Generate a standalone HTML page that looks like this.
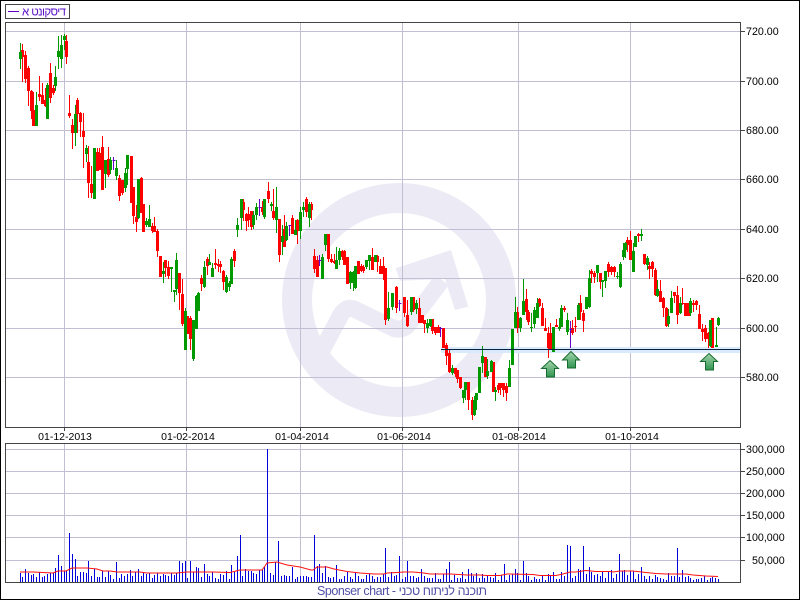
<!DOCTYPE html>
<html lang="he">
<head>
<meta charset="utf-8">
<title>Chart</title>
<style>
html,body{margin:0;padding:0;background:#fff;width:800px;height:600px;overflow:hidden}
svg{display:block;position:absolute;left:0;top:0}
text{font-family:"Liberation Sans","Noto Sans CJK JP",sans-serif}
</style>
</head>
<body>
<svg width="800" height="600" viewBox="0 0 800 600" xmlns="http://www.w3.org/2000/svg">
<defs>
<linearGradient id="ag" x1="0" y1="0" x2="0" y2="1"><stop offset="0" stop-color="#a6d6ae"/><stop offset="1" stop-color="#2f9450"/></linearGradient>
</defs>
<rect width="800" height="600" fill="#fff"/>
<!-- watermark -->
<g fill="none" stroke="#ecebf5">
<circle cx="399" cy="300" r="102" stroke-width="30"/>
<path d="M320 354L340.7 315Q346 306 354 309L393 328Q400 331 407 326L442 280" stroke-width="17" stroke-linejoin="round"/>
</g>
<polygon points="395.7,268.3 451,250 468.3,306.7 455,310 445,279 400,280.7" fill="#ecebf5"/>
<!-- grid -->
<g stroke="#c2bfd4" stroke-width="1" shape-rendering="crispEdges" fill="none">
<path d="M6 31.5H740M6 81.5H740M6 130.5H740M6 179.5H740M6 229.5H740M6 278.5H740M6 328.5H740M6 377.5H740"/>
<path d="M64.5 23V427M186.5 23V427M300.5 23V427M402.5 23V427M518.5 23V427M630.5 23V427"/>
<path d="M6 449.5H740M6 471.5H740M6 493.5H740M6 515.5H740M6 537.5H740M6 560.5H740"/>
<path d="M64.5 444V582M186.5 444V582M300.5 444V582M402.5 444V582M518.5 444V582M630.5 444V582"/>
</g>
<!-- support line -->
<rect x="441" y="347" width="299" height="6" fill="#d8eafb"/>
<!-- candles -->
<g transform="translate(.5,0)" fill="none" shape-rendering="crispEdges">
<path stroke="#ff0000" stroke-width="1" d="M22 44V82M25 51V83M28 66V106M31 90V119M33 92V126M39 76V101M42 83V104M45 88V107M50 63V103M53 85V95M66 35V64M69 95V118M72 119V149M77 98V133M80 112V137M83 113V168M88 146V198M91 166V198M97 148V171M99 148V170M102 136V190M108 147V177M119 175V201M122 180V195M131 156V203M133 187V224M136 205V232M141 177V213M143 204V232M152 223V233M154 217V232M157 229V257M160 256V277M165 260V277M168 261V279M179 273V310M182 279V326M187 316V334M190 316V350M201 275V291M207 257V275M215 249V269M218 259V272M220 261V273M223 270V290M234 249V267M243 199V221M246 213V231M248 207V227M251 211V230M262 201V215M268 182V203M273 189V220M279 219V262M284 215V247M292 215V234M297 219V244M306 197V217M311 202V220M314 249V273M317 256V277M328 234V262M331 254V263M334 254V264M342 250V260M344 250V265M347 257V284M358 261V274M361 264V272M363 265V273M372 248V270M377 255V272M380 259V274M383 257V280M385 268V325M396 286V313M404 297V317M407 300V327M413 297V312M419 298V323M422 315V323M424 320V333M432 319V334M435 327V335M438 325V333M443 328V348M446 343V365M449 349V373M455 368V377M457 370V383M460 377V389M468 382V410M472 397V420M485 357V377M493 362V392M498 383V393M500 383V395M503 383V397M506 383V401M517 307V333M526 289V320M528 310V325M539 298V307M542 303V326M545 318V331M548 327V358M550 323V350M556 319V327M564 306V312M572 320V335M575 317V332M580 295V320M583 310V332M591 269V283M594 271V283M600 273V289M608 262V277M611 266V275M614 266V277M627 237V252M630 231V260M638 233V242M644 254V265M649 262V279M652 261V277M655 268V296M660 280V302M663 297V317M666 307V327M674 292V303M677 286V324M682 288V305M685 303V316M688 303V316M693 300V312M696 300V310M699 305V329M702 324V341M705 325V342M708 332V348M712 318V348"/>
<path stroke="#ff0000" stroke-width="3" d="M22 50V57M25 55V79M28 68V91M31 91V111M33 110V126M39 94V97M42 95V104M45 100V106M50 73V98M53 88V93M66 41V57M69 113V116M72 125V133M77 100V114M80 113V122M83 131V137M88 162V183M91 184V193M97 152V171M99 153V170M102 147V190M108 159V175M119 178V196M122 180V193M131 156V203M133 187V216M136 217V222M141 178V213M143 204V232M152 226V231M154 226V232M157 231V251M160 256V277M165 260V268M168 267V276M179 273V293M182 294V324M187 316V334M190 318V339M201 278V284M207 259V266M215 263V265M218 264V266M220 264V267M223 271V282M234 251V261M243 202V210M246 214V221M248 214V220M251 211V227M262 207V212M268 191V199M273 211V218M279 219V255M284 229V247M292 218V234M297 220V231M306 199V212M311 204V210M314 256V269M317 260V277M328 234V259M331 259V262M334 261V263M342 251V257M344 251V265M347 257V284M358 261V274M361 266V271M363 267V271M372 257V270M377 256V262M380 266V274M383 266V274M385 268V320M396 287V308M404 297V313M407 315V326M413 297V310M419 308V323M422 315V323M424 320V324M432 319V331M435 327V333M438 327V333M443 328V348M446 345V356M449 353V372M455 368V374M457 370V379M460 377V388M468 382V400M472 400V415M485 357V377M493 362V392M498 385V390M500 383V388M503 383V390M506 386V393M517 312V328M526 299V312M528 312V322M539 299V306M542 308V326M545 328V331M548 333V348M550 333V350M556 325V327M564 308V310M572 328V333M575 326V327M580 303V312M583 313V321M591 271V274M594 273V277M600 273V282M608 264V272M611 267V272M614 267V272M627 240V245M630 240V260M638 234V236M644 254V264M649 266V269M652 262V269M655 270V295M660 291V302M663 298V308M666 308V326M674 292V296M677 295V315M682 303V304M685 303V316M688 303V316M693 303V305M696 301V305M699 314V329M702 329V332M705 328V339M708 333V339M712 318V348"/>
<path stroke="#009900" stroke-width="1" d="M20 43V69M36 92V126M47 83V119M55 66V91M58 36V69M61 35V68M64 34V50M75 105V146M86 145V162M94 148V199M105 160V188M110 157V174M116 160V180M125 168V192M127 155V185M138 179V219M146 218V227M149 205V227M163 262V283M171 267V292M174 290V302M176 253V295M185 308V350M193 320V361M196 295V329M198 292V311M204 261V288M209 254V265M212 263V277M226 275V293M229 281V291M231 257V284M237 218V237M241 199V230M253 211V229M256 203V220M264 199V219M271 202V211M276 187V233M282 225V255M286 222V241M295 220V235M300 207V239M303 202V217M309 202V227M322 254V279M325 234V251M336 247V269M339 248V265M350 271V289M353 271V291M355 266V289M366 260V269M369 255V270M375 255V262M388 292V321M392 293V310M411 297V315M416 300V314M427 319V333M430 319V327M452 365V375M463 390V403M465 382V400M474 396V416M476 393V410M479 367V393M482 346V373M487 359V379M491 360V372M495 387V401M509 360V387M512 329V365M515 297V328M520 317V332M523 279V315M531 313V332M534 307V328M537 298V318M553 327V352M559 318V331M561 305V327M567 313V335M578 303V320M586 297V309M589 270V308M597 265V282M602 280V297M605 271V288M617 272V279M620 262V288M623 243V260M625 242V258M633 243V272M635 236V247M641 229V241M647 256V270M657 280V297M668 309V327M671 291V313M680 297V314M690 298V316M710 320V347M716 327V347M718 317V326"/>
<path stroke="#009900" stroke-width="3" d="M20 52V59M36 105V126M47 85V119M55 77V86M58 51V57M61 45V59M64 36V40M75 114V133M86 148V154M94 148V199M105 160V174M110 160V170M116 168V176M125 173V188M127 155V169M138 179V218M146 221V225M149 219V227M163 271V274M171 267V269M174 290V292M176 260V289M185 311V350M193 320V359M196 296V329M198 293V311M204 267V287M209 262V265M212 268V277M226 277V292M229 283V287M231 259V284M237 225V230M241 199V218M253 215V225M256 207V215M264 199V217M271 204V206M276 207V220M282 236V242M286 226V240M295 230V235M300 212V231M303 207V210M309 204V218M322 257V279M325 234V245M336 260V269M339 251V260M350 272V283M353 272V283M355 266V288M366 260V267M369 255V261M375 255V262M388 308V319M392 293V307M411 297V312M416 303V309M427 323V328M430 319V326M452 368V373M463 390V398M465 382V390M474 400V415M476 393V400M479 367V393M482 356V363M487 371V376M491 361V372M495 390V392M509 368V387M512 329V365M515 312V328M520 318V328M523 301V315M531 327V328M534 310V324M537 303V318M553 327V352M559 327V329M561 308V327M567 320V332M578 305V320M586 297V309M589 278V307M597 265V273M602 280V282M605 271V281M617 276V277M620 264V287M623 250V257M625 243V250M633 251V272M635 236V247M641 234V236M647 258V265M657 289V296M668 316V324M671 298V313M680 303V313M690 301V313M710 320V346M716 345V347M718 318V325"/>
<path stroke="#6600cc" stroke-width="1" d="M113 157V170M259 199V216M289 225V236M319 255V266M399 300V311M440 327V337M570 321V348"/>
<path stroke="#6600cc" stroke-width="1" d="M112 160.5h3M258 207.5h3M288 225.5h3M318 260.5h3M398 303.5h3M439 328.5h3M569 329.5h3"/>
</g>
<rect x="441" y="349" width="299" height="1" fill="#08223f"/>
<!-- arrows -->
<g fill="url(#ag)" stroke="#176b2e" stroke-width="1">
<polygon points="550,360.5 558.5,368.5 554.5,368.5 554.5,377 546.5,377 546.5,368.5 541.5,368.5"/>
<polygon points="571,351.5 579.5,360 575.5,360 575.5,368 567.5,368 567.5,360 562.5,360"/>
<polygon points="709,353.5 717.5,361.5 713.5,361.5 713.5,370 705.5,370 705.5,361.5 700.5,361.5"/>
</g>
<!-- volume bars -->
<path fill="none" stroke="#0000dd" stroke-width="1" shape-rendering="crispEdges" transform="translate(.5,0)" d="M20 573V582M22 577V582M25 569V582M28 573V582M31 575V582M33 574V582M36 577V582M39 572V582M42 577V582M44 576V582M47 574V582M50 573V582M53 573V582M55 568V582M58 555V582M61 566V582M64 571V582M66 571V582M69 533V582M72 554V582M75 559V582M77 576V582M80 572V582M83 572V582M86 573V582M88 561V582M91 576V582M94 569V582M97 577V582M99 577V582M102 571V582M105 577V582M108 571V582M110 575V582M113 579V582M116 562V582M119 578V582M121 574V582M124 576V582M127 574V582M130 570V582M132 576V582M135 572V582M138 569V582M141 576V582M143 573V582M146 574V582M149 573V582M152 578V582M154 575V582M157 573V582M160 576V582M163 574V582M165 575V582M168 576V582M171 573V582M174 575V582M176 573V582M179 561V582M182 563V582M185 561V582M187 578V582M190 561V582M193 572V582M196 567V582M198 568V582M201 577V582M204 564V582M207 574V582M209 576V582M212 572V582M215 578V582M218 579V582M220 574V582M223 575V582M226 571V582M229 579V582M231 565V582M234 572V582M237 556V582M240 535V582M242 576V582M245 569V582M248 571V582M251 571V582M253 573V582M256 574V582M259 570V582M262 570V582M264 567V582M267 449V582M270 573V582M273 575V582M275 562V582M278 541V582M281 576V582M284 575V582M286 576V582M289 576V582M292 567V582M295 579V582M297 577V582M300 576V582M303 576V582M306 576V582M308 577V582M311 577V582M314 535V582M317 566V582M319 564V582M322 573V582M325 566V582M328 577V582M330 578V582M333 577V582M336 565V582M339 579V582M341 579V582M344 576V582M347 572V582M350 577V582M352 579V582M355 573V582M358 576V582M361 579V582M363 579V582M366 575V582M369 574V582M372 576V582M374 579V582M377 577V582M380 577V582M383 574V582M385 548V582M388 577V582M391 572V582M394 576V582M396 575V582M399 556V582M402 579V582M405 577V582M407 561V582M410 576V582M413 576V582M416 578V582M418 577V582M421 569V582M424 576V582M427 578V582M429 578V582M432 578V582M435 573V582M438 579V582M440 579V582M443 574V582M446 569V582M449 562V582M451 580V582M454 575V582M457 578V582M460 578V582M462 572V582M465 579V582M468 569V582M471 573V582M473 576V582M476 573V582M479 578V582M482 574V582M484 578V582M487 575V582M490 577V582M493 578V582M495 573V582M498 580V582M501 575V582M504 564V582M506 580V582M509 575V582M512 574V582M515 569V582M517 573V582M520 580V582M523 561V582M526 573V582M528 576V582M531 580V582M534 577V582M536 579V582M539 579V582M542 575V582M545 580V582M548 574V582M550 575V582M553 572V582M556 579V582M559 579V582M561 572V582M564 576V582M567 545V582M570 546V582M572 578V582M575 576V582M578 569V582M580 570V582M583 546V582M586 574V582M589 567V582M591 572V582M594 575V582M597 574V582M600 576V582M602 572V582M605 578V582M608 572V582M611 570V582M613 578V582M616 574V582M619 554V582M622 571V582M624 570V582M627 575V582M630 571V582M633 571V582M635 579V582M638 574V582M641 567V582M644 576V582M646 579V582M649 576V582M652 579V582M655 575V582M657 577V582M660 578V582M663 579V582M666 580V582M668 573V582M671 576V582M674 576V582M677 548V582M679 577V582M682 570V582M685 577V582M688 576V582M690 578V582M693 580V582M696 579V582M698 579V582M701 578V582M704 576V582M707 580V582M710 578V582M712 577V582M715 578V582M718 579V582"/>
<!-- MA line -->
<polyline fill="none" stroke="#ff1010" stroke-width="1" points="20,572 33,572 43,572.5 53,573 58,571 66,571 72,568 87,568 97,569 103,571 110,571 117,572 140,572 147,573 153,573 177,573 187,572 213,572 230,572.5 240,570 257,570 262,570 265,566 267,563 277,562 287,565 300,567 311,570 313,570 317,567 327,567 334,569 347,571.5 360,573 374,574 384,574 387,573 397,572.5 404,572 413,572 424,573 430,574 447,574 451,574 467,575 480,575 487,575.5 500,575.5 507,574 533,574.5 540,575.5 556,575.5 563,574 570,572 576,572 586,570.5 596,571.5 610,571.5 613,572 620,571 633,571 646,572.5 656,573.5 666,574 686,574 693,575 706,576 718,576.5"/>
<!-- frames -->
<g fill="none" stroke="#444" stroke-width="1" shape-rendering="crispEdges">
<rect x="5.5" y="22.5" width="735" height="405"/>
<rect x="5.5" y="443.5" width="735" height="139"/>
<rect x="5.5" y="4.5" width="64" height="14"/>
<path d="M741 31.5h4M741 81.5h4M741 130.5h4M741 179.5h4M741 229.5h4M741 278.5h4M741 328.5h4M741 377.5h4M741 449.5h4M741 471.5h4M741 493.5h4M741 515.5h4M741 537.5h4M741 560.5h4M64.5 428v3M186.5 428v3M300.5 428v3M402.5 428v3M518.5 428v3M630.5 428v3"/>
</g>
<rect x=".5" y=".5" width="799" height="599" fill="none" stroke="#000" stroke-width="1" shape-rendering="crispEdges"/>
<!-- legend -->
<path d="M8 11.5H19" stroke="#6600cc" stroke-width="1" shape-rendering="crispEdges"/>
<text x="22" y="15.5" font-size="11.5" fill="#5a10c8" textLength="44" lengthAdjust="spacing">דיסקונט א</text>
<!-- axis labels -->
<g font-size="10.7" fill="#000">
<text x="746" y="35">720.00</text>
<text x="746" y="85">700.00</text>
<text x="746" y="134">680.00</text>
<text x="746" y="183">660.00</text>
<text x="746" y="233">640.00</text>
<text x="746" y="282">620.00</text>
<text x="746" y="332">600.00</text>
<text x="746" y="381">580.00</text>
<text x="746" y="453">300,000</text>
<text x="746" y="475">250,000</text>
<text x="746" y="497">200,000</text>
<text x="746" y="519">150,000</text>
<text x="746" y="541">100,000</text>
<text x="752" y="564">50,000</text>
</g>
<g font-size="10.5" fill="#000" text-anchor="middle">
<text x="65" y="440">01-12-2013</text>
<text x="188" y="440">01-02-2014</text>
<text x="302" y="440">01-04-2014</text>
<text x="404" y="440">01-06-2014</text>
<text x="519" y="440">01-08-2014</text>
<text x="632" y="440">01-10-2014</text>
</g>
<text x="317" y="595" font-size="12.5" fill="#5050a8" textLength="170" lengthAdjust="spacing">Sponser chart - תוכנה לניתוח טכני</text>
</svg>
</body>
</html>
